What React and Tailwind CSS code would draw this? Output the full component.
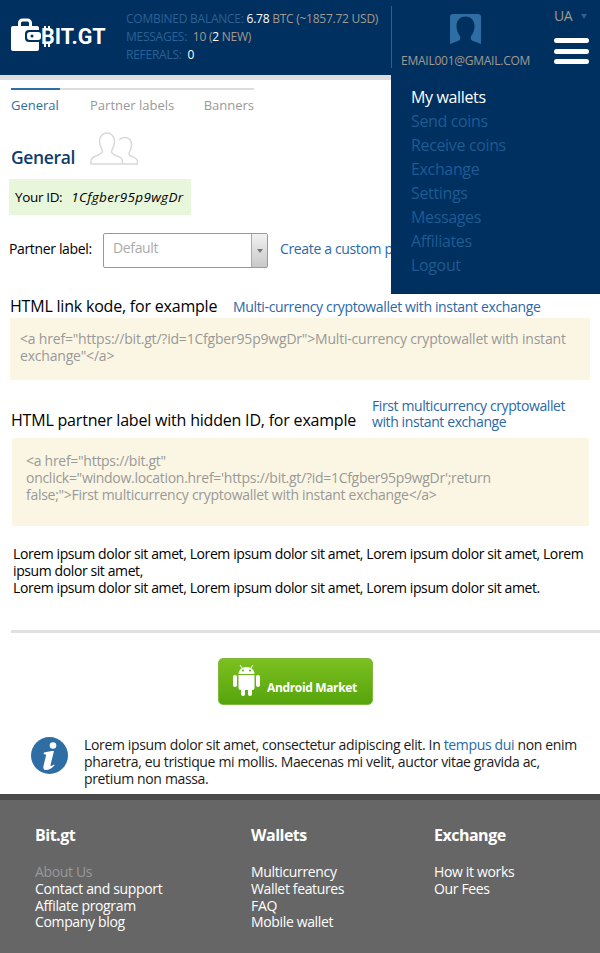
import React from 'react';

const Logo = () => (
  <div className="flex items-start">
    <svg width="42" height="34" viewBox="0 0 42 34" className="shrink-0">
      <path d="M8.500 9V5a3 3 0 0 1 3-3h5a3 3 0 0 1 3 3v4" fill="none" stroke="#fff" strokeWidth="3" />
      <rect x="0" y="8" width="28" height="25" rx="2" fill="#fff" />
      <rect x="14" y="12" width="18" height="12" rx="4" fill="#00305f" />
      <rect x="16" y="14" width="14" height="8" rx="3" fill="#fff" />
      <circle cx="21" cy="18" r="1.500" fill="#00305f" />
    </svg>
    <span className="relative -ml-[12px] mt-[7px] text-[21.500px] leading-[24px] font-bold text-white tracking-normal font-['Roboto',sans-serif]">
      BIT.GT
      <span className="absolute left-[3px] top-[1px] h-[3px] w-[1.500px] bg-white" />
      <span className="absolute left-[7px] top-[1px] h-[3px] w-[1.500px] bg-white" />
      <span className="absolute left-[3px] top-[19px] h-[3px] w-[1.500px] bg-white" />
      <span className="absolute left-[7px] top-[19px] h-[3px] w-[1.500px] bg-white" />
    </span>
  </div>
);

const UserIcon = () => (
  <svg width="31" height="30" viewBox="0 0 31 30">
    <path fill="#2f6ea5" d="M3 0h25a3 3 0 0 1 3 3v27l-9-3.500c-1.500-.8-1.500-3-1-4.500 2-2 3.500-6 3.500-10C24.500 5.500 20 2.500 15.500 2.500S6.500 5.500 6.500 12c0 4 1.500 8 3.500 10 .5 1.500.5 3.700-1 4.500L0 30V3a3 3 0 0 1 3-3z" />
  </svg>
);

const PeopleIcon = () => (
  <svg width="48" height="33" viewBox="0 0 48 33" fill="none" stroke="#d9d9d9" strokeWidth="1.500">
    <path d="M1 32v-3c0-3 2-4 6-5.500 4-1.500 5.500-2.500 5.500-4.500 0-1.500-3-4-3-10C9.500 4 13 1 17 1s7.500 3 7.500 8.500c0 6-3 8.500-3 10 0 2 1.500 3 5.500 4.500 4 1.500 5.500 2.500 5.500 5.500v2.500z" />
    <path d="M29 8c1.500-1.500 3.500-2.500 6-2.500 4 0 6.500 3 6.500 7.500 0 5-2.500 7-2.500 8.500 0 2 1.500 2.500 4 3.500 3 1.200 4.500 2.500 4.500 4.500V32H33" />
  </svg>
);

const AndroidIcon = () => (
  <svg width="27" height="32" viewBox="0 0 27 32" fill="#fff">
    <path d="M5.500 10C5.800 6 8.500 3 13.500 3s7.700 3 8 7z" />
    <path d="M9 4L7 1M18 4l2-3" stroke="#fff" strokeWidth="1" />
    <circle cx="10" cy="6.500" r="1" fill="#5aa80f" />
    <circle cx="17" cy="6.500" r="1" fill="#5aa80f" />
    <path d="M5.500 11h16v13a2 2 0 0 1-2 2h-12a2 2 0 0 1-2-2z" />
    <rect x="0" y="11" width="4" height="12" rx="2" />
    <rect x="23" y="11" width="4" height="12" rx="2" />
    <rect x="8" y="24" width="4" height="8" rx="2" />
    <rect x="15" y="24" width="4" height="8" rx="2" />
  </svg>
);

const InfoIcon = () => (
  <svg width="37" height="37" viewBox="0 0 37 37" className="shrink-0">
    <circle cx="18.500" cy="18.500" r="18.500" fill="#2f6ea5" />
    <circle cx="22" cy="8.500" r="3.300" fill="#fff" />
    <path fill="#fff" d="M13 15.500l7.500-1.500h2.500l-3.500 14c-.3 1.300 1 1.300 3.500-.5l.5 1c-3 3-6 4.500-8.500 4.500-2.500 0-3-1.800-2.500-4l2.500-10.500c.2-1-.5-1.500-2.500-1.300z" />
  </svg>
);

const menuItems = ['Send coins', 'Receive coins', 'Exchange', 'Settings', 'Messages', 'Affiliates', 'Logout'];

const footerColumns = [
  { title: 'Bit.gt', width: 'w-[216px]', links: ['About Us', 'Contact and support', 'Affilate program', 'Company blog'], muted: 'About Us' },
  { title: 'Wallets', width: 'w-[183px]', links: ['Multicurrency', 'Wallet features', 'FAQ', 'Mobile wallet'] },
  { title: 'Exchange', width: 'w-[130px]', links: ['How it works', 'Our Fees'] },
];

export default function App() {
  return (
    <div className="relative w-[600px] h-[953px] overflow-hidden bg-white text-black font-['Open_Sans',sans-serif] text-[14px] tracking-[-0.35px]">
      {/* Header */}
      <header className="h-[80px] bg-[#00305f] border-b-[5px] border-[#dddddd] flex">
        <div className="w-[126px] pl-[11px] pt-[18px] shrink-0"><Logo /></div>
        <div className="pt-[10px] text-[12px] leading-[18px] tracking-[-0.25px] text-[#2a6197] whitespace-nowrap">
          <div>COMBINED BALANCE: <span className="text-white">6.78</span> <span className="text-[#a09a90]">BTC (~1857.72 USD)</span></div>
          <div>MESSAGES: &nbsp;<span className="text-[#a09a90]">10 (<span className="text-white">2</span> NEW)</span></div>
          <div>REFERALS: &nbsp;<span className="text-white">0</span></div>
        </div>
      </header>

      {/* Account menu */}
      <div className="absolute top-0 right-0 w-[209px] h-[294px] bg-[#00305f]">
        <div className="absolute left-0 top-[6px] h-[62px] w-px bg-[#2a6197]" />
        <div className="absolute left-[59px] top-[14px]"><UserIcon /></div>
        <div className="absolute left-[10px] top-[53px] text-[12px] leading-[16px] tracking-[-0.25px] text-[#a09a90] whitespace-nowrap">EMAIL001@GMAIL.COM</div>
        <div className="absolute left-[163px] top-[8px] flex items-center gap-[9px] text-[14px] leading-[16px] text-[#a09a90]">
          UA
          <span className="w-0 h-0 border-x-[3px] border-t-[5px] border-x-transparent border-t-[#2a6197]" />
        </div>
        <div className="absolute left-[163px] top-[38px] w-[35px] flex flex-col gap-[5.500px]">
          <span className="h-[5px] rounded-full bg-white" />
          <span className="h-[5px] rounded-full bg-white" />
          <span className="h-[5px] rounded-full bg-white" />
        </div>
        <ul className="absolute left-[20px] top-[85px] text-[16px] leading-[24px] text-[#1f5a92]">
          <li className="text-white">My wallets</li>
          {menuItems.map((item) => <li key={item}>{item}</li>)}
        </ul>
      </div>

      {/* Tabs */}
      <div className="ml-[11px] mt-[8px] w-[243px]">
        <div className="h-[2px] bg-[#dddddd]"><div className="h-[2px] w-[49px] bg-[#2f6ea5]" /></div>
        <div className="flex text-[13px] leading-[18px] pt-[6px] text-[#999999] tracking-normal whitespace-nowrap">
          <span className="w-[80px] text-[#2f6ea5]">General</span>
          <span className="w-[115px]">Partner labels</span>
          <span>Banners</span>
        </div>
      </div>

      <div className="ml-[11px] mt-[18px] flex items-end h-[33px]">
        <h1 className="w-[79px] -mb-[4px] text-[17.500px] leading-[24px] font-semibold text-[#0f3c6c]">General</h1>
        <PeopleIcon />
      </div>

      <div className="ml-[9px] mt-[14px] w-[182px] h-[36px] bg-[#e8f6dc] pl-[6px] flex items-center gap-[9px] whitespace-nowrap text-[13.500px]">
        <span>Your ID:</span>
        <em className="tracking-[0.3px]">1Cfgber95p9wgDr</em>
      </div>

      <div className="ml-[9px] mt-[18px] flex items-center h-[35px] whitespace-nowrap">
        <span className="w-[94px] pb-[4px]">Partner label:</span>
        <div className="w-[165px] h-[35px] flex border border-[#999999] rounded-[2px]">
          <span className="flex-1 pl-[9px] leading-[27px] text-[#aaaaaa]">Default</span>
          <span className="w-[16px] bg-gradient-to-b from-[#f2f2f2] to-[#c8c8c8] border-l border-[#aaaaaa] flex items-center justify-center">
            <span className="w-0 h-0 border-x-[3px] border-t-[4px] border-x-transparent border-t-[#777777]" />
          </span>
        </div>
        <span className="ml-[12px] pb-[4px] text-[#2a68a8]">Create a custom partner label</span>
      </div>

      {/* HTML link */}
      <div className="ml-[10px] mt-[27px] flex items-center h-[22px] whitespace-nowrap">
        <h2 className="w-[223px] text-[16px] leading-[22px] tracking-[-0.2px]">HTML link kode, for example</h2>
        <a className="text-[#2a68a8]">Multi-currency cryptowallet with instant exchange</a>
      </div>
      <div className="mx-[10px] mt-[1px] h-[62px] bg-[#fbf6e3] pl-[10px] pr-[20px] pt-[12px] leading-[17px] tracking-[-0.2px] text-[#999999]">
        &lt;a href="https://bit.gt/?id=1Cfgber95p9wgDr"&gt;Multi-currency cryptowallet with instant exchange"&lt;/a&gt;
      </div>

      {/* Partner label */}
      <div className="ml-[11px] mt-[18px] flex items-center h-[40px] whitespace-nowrap">
        <h2 className="w-[361px] text-[16px] leading-[22px] pt-[4px] tracking-[-0.2px]">HTML partner label with hidden ID, for example</h2>
        <a className="leading-[16px] pb-[8px] tracking-[-0.4px] text-[#2a68a8]">First multicurrency cryptowallet<br />with instant exchange</a>
      </div>
      <div className="ml-[12px] mr-[11px] h-[88px] bg-[#fbf6e3] pl-[14px] pr-[80px] pt-[14px] leading-[17px] tracking-[-0.28px] text-[#999999]">
        &lt;a href="https://bit.gt"<br />
        onclick="window.location.href='https://bit.gt/?id=1Cfgber95p9wgDr';return false;"&gt;First multicurrency cryptowallet with instant exchange&lt;/a&gt;
      </div>

      <p className="ml-[13px] mr-[10px] mt-[19px] leading-[17px] tracking-[-0.4px]">
        Lorem ipsum dolor sit amet, Lorem ipsum dolor sit amet, Lorem ipsum dolor sit amet, Lorem ipsum dolor sit amet,<br />
        Lorem ipsum dolor sit amet, Lorem ipsum dolor sit amet, Lorem ipsum dolor sit amet.
      </p>

      <div className="ml-[11px] mt-[34px] h-[3px] bg-[#e0e0e0]" />

      {/* Android button */}
      <div className="mt-[25px] flex justify-center">
        <div className="ml-[-9px] w-[155px] h-[47px] rounded-[5px] bg-gradient-to-b from-[#7cc01f] to-[#55a40c] border border-[#7fb83a] flex items-start pt-[5px] pl-[14px] gap-[7px]">
          <AndroidIcon />
          <span className="mt-[15px] text-[12px] leading-[18px] font-bold text-white whitespace-nowrap">Android Market</span>
        </div>
      </div>

      {/* Info */}
      <div className="ml-[31px] mr-[20px] mt-[27px] flex gap-[16px] h-[62px]">
        <div className="pt-[5px] h-full"><InfoIcon /></div>
        <p className="pt-[4px] leading-[17px] text-[#1a1a1a]">
          Lorem ipsum dolor sit amet, consectetur adipiscing elit. In <a className="text-[#2a68a8]">tempus dui</a> non enim pharetra, eu tristique mi mollis. Maecenas mi velit, auctor vitae gravida ac, pretium non massa.
        </p>
      </div>

      {/* Footer */}
      <footer className="h-[159px] bg-[#666666] border-t-[6px] border-[#4a4a4a] pl-[35px] pt-[24px] flex text-white">
        {footerColumns.map((col) => (
          <div key={col.title} className={col.width}>
            <h3 className="text-[16px] leading-[22px] font-bold tracking-[-0.5px]">{col.title}</h3>
            <ul className="mt-[18px] text-[14px] leading-[16.800px]">
              {col.links.map((link) => (
                <li key={link} className={link === col.muted ? 'text-[#999999]' : ''}>{link}</li>
              ))}
            </ul>
          </div>
        ))}
      </footer>
    </div>
  );
}
